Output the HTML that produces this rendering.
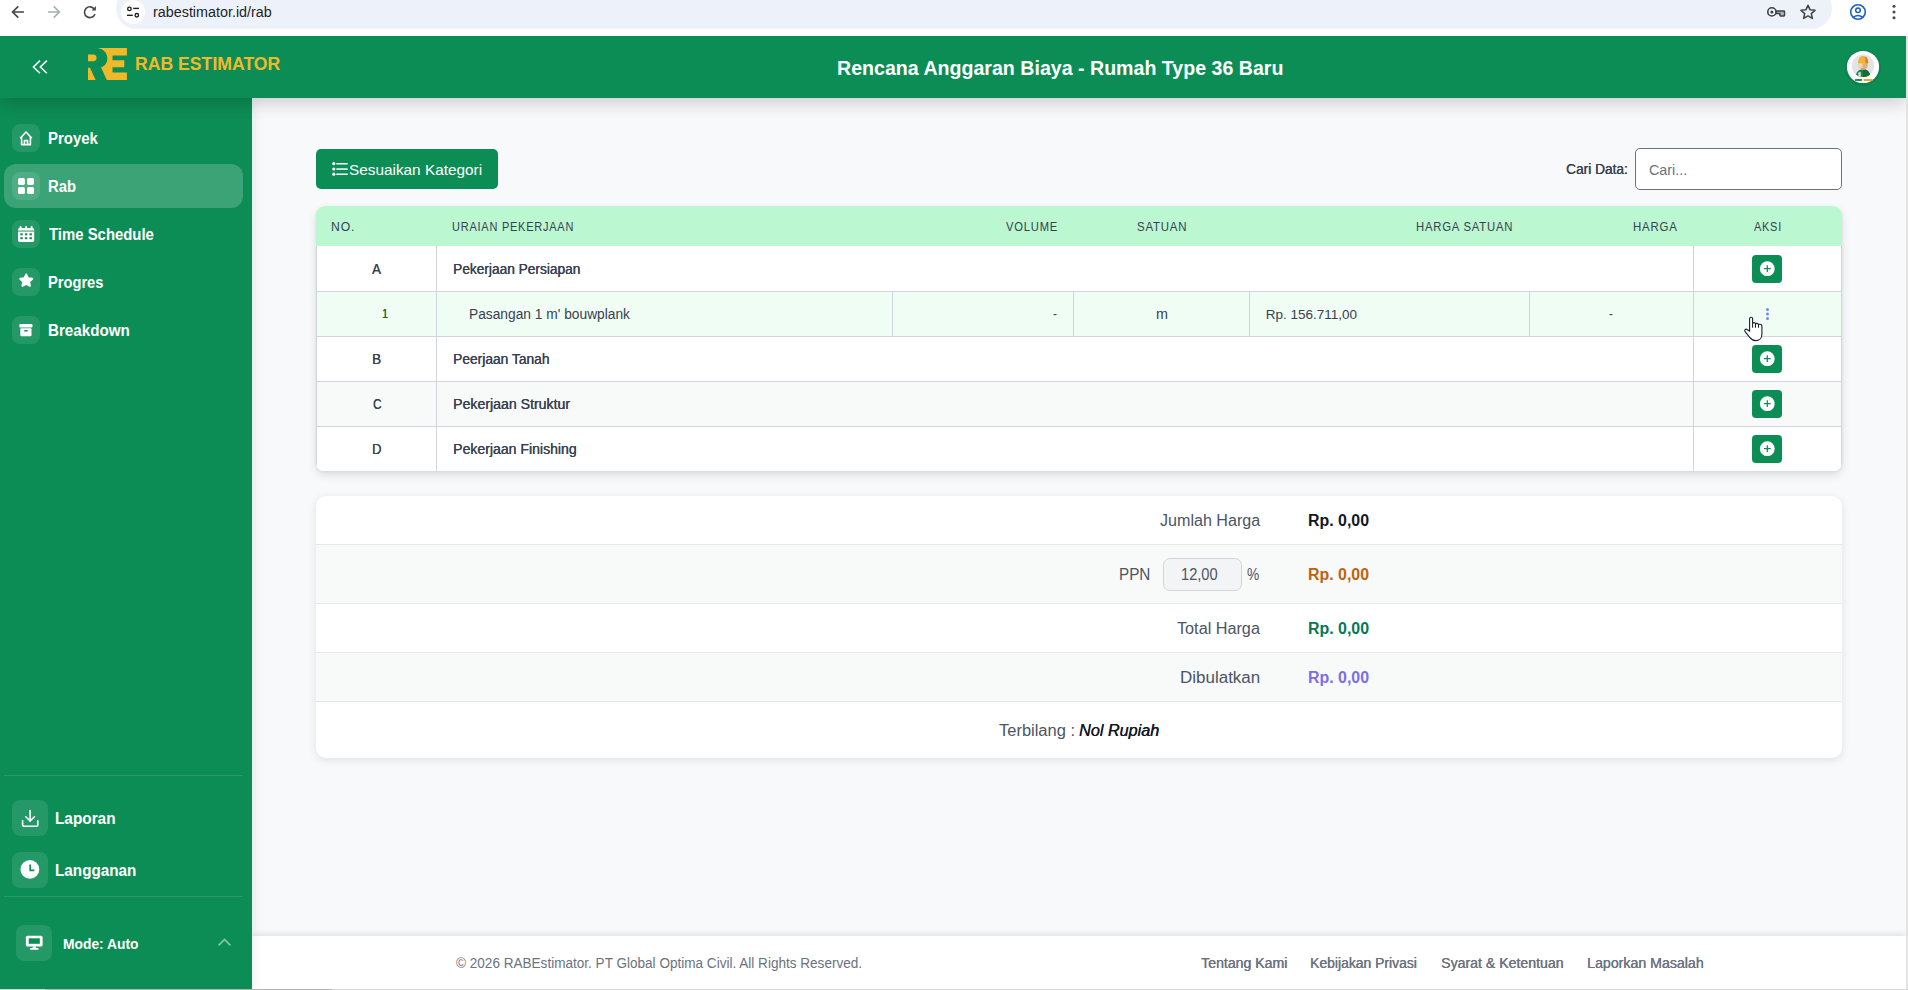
<!DOCTYPE html>
<html>
<head>
<meta charset="utf-8">
<title>RAB Estimator</title>
<style>
*{box-sizing:border-box;margin:0;padding:0}
html,body{width:1908px;height:990px;overflow:hidden}
body{position:relative;background:#f8f9fb;font-family:"Liberation Sans",sans-serif;color:#374151}
.tx{position:absolute;white-space:nowrap;line-height:1;transform-origin:0 0;z-index:20}
.abs{position:absolute}
svg{position:absolute;overflow:visible}
#chrome{position:absolute;left:0;top:0;width:1908px;height:36px;background:#fff;z-index:10}
#pill{position:absolute;left:116px;top:-12px;width:1716px;height:41px;border-radius:20.5px;background:#edf2fa}
#siteinfo{position:absolute;left:121px;top:-0.5px;width:24px;height:24px;border-radius:12px;background:#fff}
#header{position:absolute;left:0;top:36px;width:1906px;height:62px;background:#0c8d55;z-index:6;box-shadow:0 4px 18px rgba(0,0,0,.2)}
#scroll{position:absolute;left:1906px;top:36px;width:2px;height:954px;background:#e3e3e3;z-index:11}
#sidebar{position:absolute;left:0;top:98px;width:252px;height:892px;background:#0c8d55;z-index:5;box-shadow:2px 0 10px rgba(0,0,0,.07)}
.nav{position:absolute;left:4px;width:239px;height:44px;border-radius:12px}
.nav.active{background:rgba(255,255,255,.2)}
.ibox{position:absolute;left:8px;top:8px;width:28px;height:28px;border-radius:8px;background:rgba(255,255,255,.1)}
.ibox2{position:absolute;width:36px;height:36px;border-radius:8px;background:rgba(255,255,255,.1)}
.sep{position:absolute;left:4px;width:239px;height:1px;background:rgba(255,255,255,.13)}
#btn{position:absolute;left:316px;top:149px;width:182px;height:40px;border-radius:5px;background:#0c8d55}
#search{position:absolute;left:1635px;top:148px;width:207px;height:42px;border:1.3px solid #6b7280;border-radius:5px;background:#fff}
#table{position:absolute;left:316px;top:206px;width:1526px;height:265px;border-radius:9px 9px 8px 8px;background:#fff;box-shadow:0 4px 10px rgba(0,0,0,.11),0 1px 3px rgba(0,0,0,.06);overflow:hidden}
#thead{position:absolute;left:0;top:0;width:1526px;height:40px;background:#bbf7d0}
.row{position:absolute;left:0;width:1526px;height:45px;border-left:1px solid #d1d5db;border-right:1px solid #d1d5db}
.hl{position:absolute;left:0;width:1526px;height:1px;background:#d1d5db}
.vl{position:absolute;width:1px;background:#d1d5db}
.add{position:absolute;left:1752px;width:30px;height:28px;border-radius:4px;background:#0c8d55;z-index:3}
#summary{position:absolute;left:316px;top:496px;width:1526px;height:262px;border-radius:10px;background:#fff;box-shadow:0 2px 8px rgba(0,0,0,.10);overflow:hidden}
.shl{position:absolute;left:0;width:1526px;height:1px;background:#e5e7eb}
#ppn{position:absolute;left:1162.5px;top:557.5px;width:79px;height:33px;border:1px solid #d1d5db;border-radius:7px;background:#f3f4f6;z-index:3}
#footer{position:absolute;left:252px;top:936px;width:1654px;height:54px;background:#fff;box-shadow:0 -2px 6px rgba(0,0,0,.10);z-index:4}
</style>
</head>
<body>
<!-- browser chrome -->
<div id="chrome">
  <div id="pill"></div>
  <div id="siteinfo"></div>
  <svg width="1908" height="36" style="left:0;top:0">
    <g fill="none" stroke-width="1.7" stroke-linecap="butt">
      <path d="M24,12 H13 M18.3,6.3 L12.6,12 L18.3,17.7" stroke="#474747"/>
      <path d="M48,12 H59 M53.7,6.3 L59.4,12 L53.7,17.7" stroke="#a9b1ad"/>
      <path d="M94.5,9.4 A5.4,5.4 0 1 0 95,14" stroke="#474747" stroke-width="1.6"/>
      <path d="M91.6,10.4 H95.9 V6.1 Z" fill="#474747" stroke="none"/>
      <circle cx="129.4" cy="8.9" r="1.75" stroke="#1f1f1f" stroke-width="1.35"/>
      <path d="M133.2,8.4 H139" stroke="#1f1f1f" stroke-width="1.4"/>
      <path d="M127,15.3 H132.8" stroke="#1f1f1f" stroke-width="1.4"/>
      <circle cx="136.8" cy="15.2" r="1.75" stroke="#1f1f1f" stroke-width="1.35"/>
      <path d="M1775.6,10.9 H1783.8 Q1784.5,10.9 1784.5,11.6 V15.3 Q1784.5,16 1783.8,16 H1780.6 Q1779.9,16 1779.9,15.3 V13.6 H1775.6 Z" fill="#b3b7bd" stroke="#3c4043" stroke-width="1.5" stroke-linejoin="round"/>
      <circle cx="1771.9" cy="11.9" r="4.1" fill="#edf2fa" stroke="#3c4043" stroke-width="1.6"/>
      <circle cx="1771.9" cy="11.9" r="1.5" fill="#3c4043" stroke="none"/>
      <path d="M1808,5.3 L1810.1,9.8 L1815,10.3 L1811.3,13.6 L1812.4,18.4 L1808,15.9 L1803.6,18.4 L1804.7,13.6 L1801,10.3 L1805.9,9.8 Z" stroke="#474747" stroke-width="1.6" stroke-linejoin="round"/>
      <circle cx="1858" cy="12" r="7.3" stroke="#1c5fc0" stroke-width="1.6"/>
      <circle cx="1858" cy="10.3" r="2.3" stroke="#1c5fc0" stroke-width="1.5"/>
      <path d="M1853.2,17.3 Q1858,13.8 1862.8,17.3" stroke="#1c5fc0" stroke-width="1.5"/>
    </g>
    <g fill="#474747"><circle cx="1894" cy="6.2" r="1.5"/><circle cx="1894" cy="12" r="1.5"/><circle cx="1894" cy="17.8" r="1.5"/></g>
  </svg>
</div>
<!-- header -->
<div id="header">
  <svg width="60" height="62" style="left:0;top:0">
    <path d="M40,24.6 L33.4,31 L40,37.2 M46.9,24.6 L40.3,31 L46.9,37.2" fill="none" stroke="#fff" stroke-width="1.5"/>
  </svg>
  <svg width="40" height="33" style="left:88px;top:12px" viewBox="0 0 40 33">
    <g fill="#f0b92b">
      <path d="M9.4,0 L38.9,0 L38.9,7.5 L24.5,7.5 L24.5,12.3 L36.3,12.3 L36.3,19.2 L24.5,19.2 L24.5,24.4 L38.9,24.4 L38.9,32 L18.8,32 L13,19.2 C17.2,18 19.6,14.2 19.3,9.7 C19,4.6 15,0.6 9.4,0 Z"/>
      <path d="M0,6.6 L5,6.6 C7.5,6.6 8.6,8 8.6,9.9 C8.6,11.8 7.5,13.2 5,13.2 L0,13.2 Z"/>
      <path d="M0,19.7 L2,19.7 L7.6,32 L0,32 Z"/>
    </g>
  </svg>
  <svg width="40" height="40" style="left:1843px;top:11px">
    <defs><clipPath id="av"><circle cx="20" cy="18.8" r="11.2"/></clipPath></defs>
    <circle cx="20" cy="21" r="18" fill="#000" opacity=".07"/>
    <circle cx="20" cy="20" r="16.1" fill="#fff"/>
    <circle cx="20" cy="18.8" r="11.2" fill="#e1e3e5"/>
    <g clip-path="url(#av)">
      <path d="M12.6,31 C12.8,25 15.5,22.2 20,22.2 C24.5,22.2 27.2,25 27.4,31 Z" fill="#138a45"/>
      <path d="M20,22.2 C24.5,22.2 27.2,25 27.4,31 L20,31 Z" fill="#0f6e3a"/>
      <rect x="15.3" y="25" width="2.6" height="6" rx="1" fill="#d8d4dc"/>
      <rect x="18" y="20" width="4" height="3" fill="#c99468"/>
      <path d="M15.8,15.5 H24.6 V19.2 C24.6,21 22.6,21.8 20.2,21.8 C17.8,21.8 15.8,21 15.8,19.2 Z" fill="#dcb07f"/>
      <path d="M15.7,15.6 H19.5 V21.2 C17.4,21 15.7,20.3 15.7,18.8 Z" fill="#efd7ae"/>
      <path d="M15,16.2 C15,11.6 17,9 20.1,9 C23.2,9 25.2,11.6 25.2,16.2 Z" fill="#f0b534"/>
      <path d="M22,9.6 C24,10.4 25.2,12.6 25.2,16.2 L22.8,16.2 Z" fill="#e07b2a"/>
    </g>
    <rect x="11.7" y="31.9" width="7.5" height="2.2" rx="1" fill="#1b8f4c"/>
    <rect x="20.5" y="31.9" width="9.4" height="2.2" rx="1" fill="#eea628"/>
  </svg>
</div>
<div id="scroll"></div>
<!-- sidebar -->
<div id="sidebar">
  <div class="nav" style="top:18px"><div class="ibox"></div></div>
  <div class="nav active" style="top:66px"><div class="ibox"></div></div>
  <div class="nav" style="top:114px"><div class="ibox"></div></div>
  <div class="nav" style="top:162px"><div class="ibox"></div></div>
  <div class="nav" style="top:210px"><div class="ibox"></div></div>
  <div class="sep" style="top:677px"></div>
  <div class="ibox2" style="left:12px;top:702px"></div>
  <div class="ibox2" style="left:12px;top:754px"></div>
  <div class="sep" style="top:798px"></div>
  <div class="ibox2" style="left:16px;top:827px"></div>
</div>
<svg width="252" height="990" style="left:0;top:0;z-index:7">
  <g fill="none" stroke="#fff" stroke-width="1.6" stroke-linejoin="round">
    <path d="M20.2,138.2 L26,132 L31.8,138.2"/>
    <path d="M21.6,136.6 V144.6 H30.4 V136.6"/>
    <path d="M24.4,144.6 V140.6 H27.6 V144.6"/>
  </g>
  <g fill="#fff">
    <rect x="18" y="178" width="6.9" height="6.9" rx="1.6"/>
    <rect x="27.1" y="178" width="6.9" height="6.9" rx="1.6"/>
    <rect x="18" y="187.1" width="6.9" height="6.9" rx="1.6"/>
    <rect x="27.1" y="187.1" width="6.9" height="6.9" rx="1.6"/>
    <!-- calendar -->
    <rect x="18" y="228" width="16.2" height="14" rx="1.8"/>
    <rect x="19.6" y="225.9" width="2" height="3.2" rx="1"/>
    <rect x="25.1" y="225.9" width="2" height="3.2" rx="1"/>
    <rect x="30.6" y="225.9" width="2" height="3.2" rx="1"/>
    <!-- star -->
    <path d="M26.2,274.4 L28.1,278.3 L32.3,278.8 L29.2,281.7 L30,285.9 L26.2,283.8 L22.4,285.9 L23.2,281.7 L20.1,278.8 L24.3,278.3 Z" stroke="#fff" stroke-width="1.9" stroke-linejoin="round"/>
    <!-- archive -->
    <rect x="19.3" y="324" width="13.2" height="3.4" rx="1"/>
    <rect x="20.3" y="328.3" width="11.2" height="8" rx="1"/>
    <!-- clock -->
    <circle cx="29.9" cy="869.4" r="9.4"/>
  </g>
  <g fill="#0c8d55">
    <rect x="18" y="230.6" width="16.2" height="0.9"/>
    <rect x="20.3" y="233.3" width="2.4" height="2"/><rect x="24.9" y="233.3" width="2.4" height="2"/><rect x="29.5" y="233.3" width="2.4" height="2"/>
    <rect x="20.3" y="237.2" width="2.4" height="2"/><rect x="24.9" y="237.2" width="2.4" height="2"/><rect x="29.5" y="237.2" width="2.4" height="2"/>
    <rect x="24.2" y="330" width="3.6" height="1.6" rx=".6"/>
  </g>
  <path d="M30.2,864.6 V870.4 H34.4" fill="none" stroke="#0c8d55" stroke-width="1.7"/>
  <g fill="none" stroke="#fff" stroke-width="1.6" stroke-linecap="round" stroke-linejoin="round">
    <path d="M30.1,810.6 V821"/>
    <path d="M25.8,816.8 L30.1,821 L34.4,816.8"/>
    <path d="M22.6,820.8 V825 Q22.6,826.2 23.8,826.2 H36.6 Q37.8,826.2 37.8,825 V820.8"/>
  </g>
  <rect x="25.9" y="935.7" width="16.7" height="10.9" rx="1.6" fill="#fff"/>
  <rect x="28.7" y="938.3" width="11.1" height="5.5" fill="#0c8d55"/>
  <rect x="32.7" y="946.4" width="3.2" height="1.8" fill="#fff"/>
  <rect x="30" y="948" width="8.6" height="1.8" rx=".6" fill="#fff"/>
  <path d="M218.6,945.4 L224.5,939.4 L230.4,945.4" fill="none" stroke="rgba(255,255,255,.5)" stroke-width="1.6"/>
</svg>
<!-- toolbar -->
<div id="btn"></div>
<svg width="20" height="20" style="left:330px;top:160px;z-index:8">
  <g fill="#fff"><circle cx="3.8" cy="3.7" r="1.6"/><circle cx="3.8" cy="9" r="1.6"/><circle cx="3.8" cy="14.2" r="1.6"/>
  <rect x="6.3" y="3" width="11.4" height="1.5"/><rect x="6.3" y="8.3" width="11.4" height="1.5"/><rect x="6.3" y="13.5" width="11.4" height="1.5"/></g>
</svg>
<div id="search"></div>
<!-- table -->
<div id="table">
  <div id="thead"></div>
  <div class="row" style="top:40px;background:#fff"></div>
  <div class="row" style="top:85px;background:#f0fdf4"></div>
  <div class="row" style="top:130px;background:#fff"></div>
  <div class="row" style="top:175px;background:#f8faf9"></div>
  <div class="row" style="top:220px;background:#fff"></div>
  <div class="hl" style="top:85px"></div>
  <div class="hl" style="top:130px"></div>
  <div class="hl" style="top:175px"></div>
  <div class="hl" style="top:220px"></div>
  <div class="vl" style="left:120px;top:40px;height:225px"></div>
  <div class="vl" style="left:1377px;top:40px;height:225px"></div>
  <div class="vl" style="left:576px;top:85px;height:45px"></div>
  <div class="vl" style="left:757px;top:85px;height:45px"></div>
  <div class="vl" style="left:933px;top:85px;height:45px"></div>
  <div class="vl" style="left:1213px;top:85px;height:45px"></div>
</div>
<div class="add" style="top:255px"></div>
<div class="add" style="top:345px"></div>
<div class="add" style="top:390px"></div>
<div class="add" style="top:435px"></div>
<svg width="30" height="240" style="left:1752px;top:246px;z-index:9">
  <g fill="#fff"><circle cx="15.3" cy="22.7" r="7.4"/><circle cx="15.3" cy="112.7" r="7.4"/><circle cx="15.3" cy="157.7" r="7.4"/><circle cx="15.3" cy="202.7" r="7.4"/></g>
  <g stroke="#0c8d55" stroke-width="1.25"><path d="M15.3,19.3 V26.1 M11.9,22.7 H18.7"/><path d="M15.3,109.3 V116.1 M11.9,112.7 H18.7"/><path d="M15.3,154.3 V161.1 M11.9,157.7 H18.7"/><path d="M15.3,199.3 V206.1 M11.9,202.7 H18.7"/></g>
  <g fill="#7a83f2"><circle cx="15.5" cy="63.6" r="1.5"/><circle cx="15.5" cy="68" r="1.5"/><circle cx="15.5" cy="72.4" r="1.5"/></g>
</svg>
<!-- cursor -->
<svg width="30" height="32" style="left:1740px;top:314px;z-index:30" viewBox="0 0 30 32">
  <path d="M9.6,17.2 V4.6 Q9.6,3.2 11.1,3.2 Q12.6,3.2 12.6,4.6 V9.3 Q12.9,8.6 14,8.6 Q15.4,8.6 15.5,9.8 Q15.8,9.4 16.9,9.4 Q18.3,9.4 18.5,10.6 Q18.8,10.3 19.7,10.3 Q21.9,10.3 21.9,12.2 V20.5 C21.9,24 19.5,26.6 15.5,26.6 C12.5,26.6 11.3,25.6 9.5,23.2 L5.1,17.6 C4,16.2 5.6,14.4 7.1,15.5 Z" fill="#fff" stroke="#1a1f2e" stroke-width="1.1" stroke-linejoin="round"/>
  <path d="M12.6,9.3 V13.8 M15.5,9.8 V13.8 M18.5,10.6 V13.8" fill="none" stroke="#1a1f2e" stroke-width="1.05"/>
</svg>
<!-- summary -->
<div id="summary">
  <div class="abs" style="left:0;top:48px;width:1526px;height:59px;background:#f8f9f9"></div>
  <div class="abs" style="left:0;top:156px;width:1526px;height:49px;background:#f8f9f9"></div>
  <div class="shl" style="top:48px"></div>
  <div class="shl" style="top:107px"></div>
  <div class="shl" style="top:156px"></div>
  <div class="shl" style="top:205px"></div>
</div>
<div id="ppn"></div>
<!-- footer -->
<div id="footer"></div>
<div class="abs" style="left:0;top:989px;width:1908px;height:1px;background:#d6d6d6;z-index:12"></div>
<div class="abs" style="left:45px;top:989px;width:287px;height:1px;background:#b4b4b4;z-index:12"></div>
<div class="tx" style="left:153.00px;top:5.46px;font-size:14px;font-weight:400;color:#1f1f1f;transform:scaleX(1.0245);">rabestimator.id/rab</div>
<div class="tx" style="left:135.05px;top:54.65px;font-size:18.5px;font-weight:700;color:#f0b92b;transform:scaleX(0.9531);">RAB ESTIMATOR</div>
<div class="tx" style="left:837.02px;top:58.38px;font-size:20px;font-weight:700;color:#ffffff;transform:scaleX(0.9797);">Rencana Anggaran Biaya - Rumah Type 36 Baru</div>
<div class="tx" style="left:47.66px;top:130.76px;font-size:16px;font-weight:700;color:#ffffff;transform:scaleX(0.9358);">Proyek</div>
<div class="tx" style="left:47.67px;top:178.76px;font-size:16px;font-weight:700;color:#ffffff;transform:scaleX(0.9269);">Rab</div>
<div class="tx" style="left:48.60px;top:226.76px;font-size:16px;font-weight:700;color:#ffffff;transform:scaleX(0.9314);">Time Schedule</div>
<div class="tx" style="left:47.68px;top:274.76px;font-size:16px;font-weight:700;color:#ffffff;transform:scaleX(0.9166);">Progres</div>
<div class="tx" style="left:47.65px;top:322.76px;font-size:16px;font-weight:700;color:#ffffff;transform:scaleX(0.9483);">Breakdown</div>
<div class="tx" style="left:55.24px;top:810.76px;font-size:16px;font-weight:700;color:#ffffff;transform:scaleX(0.9585);">Laporan</div>
<div class="tx" style="left:55.25px;top:862.76px;font-size:16px;font-weight:700;color:#ffffff;transform:scaleX(0.9538);">Langganan</div>
<div class="tx" style="left:62.98px;top:935.61px;font-size:15px;font-weight:700;color:#ffffff;transform:scaleX(0.9223);">Mode: Auto</div>
<div class="tx" style="left:348.80px;top:162.19px;font-size:15.5px;font-weight:400;color:#ffffff;transform:scaleX(0.9897);">Sesuaikan Kategori</div>
<div class="tx" style="left:1565.70px;top:162.46px;font-size:14px;font-weight:400;color:#374151;transform:scaleX(0.9786);text-shadow:0.35px 0 0 #374151;">Cari Data:</div>
<div class="tx" style="left:1648.50px;top:162.19px;font-size:15.5px;font-weight:400;color:#6b7280;transform:scaleX(0.9243);">Cari...</div>
<div class="tx" style="left:331.46px;top:220.30px;font-size:13px;font-weight:400;color:#374151;transform:scaleX(0.9356);letter-spacing:0.90px;">NO.</div>
<div class="tx" style="left:452.35px;top:220.30px;font-size:13px;font-weight:400;color:#374151;transform:scaleX(0.8456);letter-spacing:0.90px;">URAIAN PEKERJAAN</div>
<div class="tx" style="left:1005.80px;top:220.30px;font-size:13px;font-weight:400;color:#374151;transform:scaleX(0.8622);letter-spacing:0.90px;">VOLUME</div>
<div class="tx" style="left:1136.70px;top:220.30px;font-size:13px;font-weight:400;color:#374151;transform:scaleX(0.8805);letter-spacing:0.90px;">SATUAN</div>
<div class="tx" style="left:1415.83px;top:220.30px;font-size:13px;font-weight:400;color:#374151;transform:scaleX(0.8700);letter-spacing:0.90px;">HARGA SATUAN</div>
<div class="tx" style="left:1632.52px;top:220.30px;font-size:13px;font-weight:400;color:#374151;transform:scaleX(0.8808);letter-spacing:0.90px;">HARGA</div>
<div class="tx" style="left:1753.60px;top:220.30px;font-size:13px;font-weight:400;color:#374151;transform:scaleX(0.8419);letter-spacing:0.90px;">AKSI</div>
<div class="tx" style="left:372.00px;top:262.46px;font-size:14px;font-weight:400;color:#374151;transform:scaleX(0.9400);text-shadow:0.35px 0 0 #374151;">A</div>
<div class="tx" style="left:452.92px;top:262.46px;font-size:14px;font-weight:400;color:#374151;transform:scaleX(0.9783);text-shadow:0.35px 0 0 #374151;">Pekerjaan Persiapan</div>
<div class="tx" style="left:381.80px;top:307.73px;font-size:12.5px;font-weight:400;color:#166534;transform:scaleX(0.8429);text-shadow:0.35px 0 0 #166534;">1</div>
<div class="tx" style="left:468.92px;top:307.46px;font-size:14px;font-weight:400;color:#374151;transform:scaleX(0.9830);">Pasangan 1 m&#x27; bouwplank</div>
<div class="tx" style="left:1052.50px;top:307.46px;font-size:14px;font-weight:400;color:#374151;transform:scaleX(0.8400);">-</div>
<div class="tx" style="left:1156.20px;top:307.46px;font-size:14px;font-weight:400;color:#374151;transform:scaleX(1.0273);">m</div>
<div class="tx" style="left:1265.80px;top:307.88px;font-size:13.5px;font-weight:400;color:#374151;">Rp. 156.711,00</div>
<div class="tx" style="left:1609.40px;top:307.46px;font-size:14px;font-weight:400;color:#374151;transform:scaleX(0.8200);">-</div>
<div class="tx" style="left:371.94px;top:352.46px;font-size:14px;font-weight:400;color:#374151;transform:scaleX(0.9625);text-shadow:0.35px 0 0 #374151;">B</div>
<div class="tx" style="left:452.92px;top:352.46px;font-size:14px;font-weight:400;color:#374151;transform:scaleX(0.9845);text-shadow:0.35px 0 0 #374151;">Peerjaan Tanah</div>
<div class="tx" style="left:372.70px;top:397.46px;font-size:14px;font-weight:400;color:#374151;transform:scaleX(0.8300);text-shadow:0.35px 0 0 #374151;">C</div>
<div class="tx" style="left:452.89px;top:397.46px;font-size:14px;font-weight:400;color:#374151;transform:scaleX(1.0080);text-shadow:0.35px 0 0 #374151;">Pekerjaan Struktur</div>
<div class="tx" style="left:371.78px;top:442.46px;font-size:14px;font-weight:400;color:#374151;transform:scaleX(0.9222);text-shadow:0.35px 0 0 #374151;">D</div>
<div class="tx" style="left:452.90px;top:442.46px;font-size:14px;font-weight:400;color:#374151;transform:scaleX(1.0044);text-shadow:0.35px 0 0 #374151;">Pekerjaan Finishing</div>
<div class="tx" style="left:1159.70px;top:512.76px;font-size:16px;font-weight:400;color:#4b5563;transform:scaleX(1.0060);">Jumlah Harga</div>
<div class="tx" style="left:1307.81px;top:512.76px;font-size:16px;font-weight:700;color:#111827;transform:scaleX(0.9940);">Rp. 0,00</div>
<div class="tx" style="left:1118.65px;top:566.76px;font-size:16px;font-weight:400;color:#4b5563;transform:scaleX(0.9539);">PPN</div>
<div class="tx" style="left:1180.89px;top:566.76px;font-size:16px;font-weight:400;color:#4b5563;transform:scaleX(0.9147);">12,00</div>
<div class="tx" style="left:1247.00px;top:566.76px;font-size:16px;font-weight:400;color:#4b5563;transform:scaleX(0.8571);">%</div>
<div class="tx" style="left:1307.81px;top:566.76px;font-size:16px;font-weight:700;color:#c2610c;transform:scaleX(0.9940);">Rp. 0,00</div>
<div class="tx" style="left:1177.00px;top:620.76px;font-size:16px;font-weight:400;color:#4b5563;transform:scaleX(1.0132);">Total Harga</div>
<div class="tx" style="left:1307.81px;top:620.76px;font-size:16px;font-weight:700;color:#047857;transform:scaleX(0.9940);">Rp. 0,00</div>
<div class="tx" style="left:1180.34px;top:669.76px;font-size:16px;font-weight:400;color:#4b5563;transform:scaleX(1.0610);">Dibulatkan</div>
<div class="tx" style="left:1307.81px;top:669.76px;font-size:16px;font-weight:700;color:#7c6ee6;transform:scaleX(0.9940);">Rp. 0,00</div>
<div class="tx" style="left:999.00px;top:722.76px;font-size:16px;font-weight:400;color:#4b5563;transform:scaleX(1.0294);">Terbilang :</div>
<div class="tx" style="left:1078.70px;top:722.76px;font-size:16px;font-weight:400;color:#111827;font-style:italic;transform:scaleX(1.0119);text-shadow:0.35px 0 0 #111827;">Nol Rupiah</div>
<div class="tx" style="left:455.80px;top:956.46px;font-size:14px;font-weight:400;color:#6b7280;transform:scaleX(0.9684);">© 2026 RABEstimator. PT Global Optima Civil. All Rights Reserved.</div>
<div class="tx" style="left:1200.60px;top:956.46px;font-size:14px;font-weight:400;color:#6b7280;transform:scaleX(1.0071);text-shadow:0.35px 0 0 #6b7280;">Tentang Kami</div>
<div class="tx" style="left:1310.41px;top:956.46px;font-size:14px;font-weight:400;color:#6b7280;transform:scaleX(0.9936);text-shadow:0.35px 0 0 #6b7280;">Kebijakan Privasi</div>
<div class="tx" style="left:1441.40px;top:956.46px;font-size:14px;font-weight:400;color:#6b7280;transform:scaleX(1.0081);text-shadow:0.35px 0 0 #6b7280;">Syarat &amp; Ketentuan</div>
<div class="tx" style="left:1586.79px;top:956.46px;font-size:14px;font-weight:400;color:#6b7280;transform:scaleX(1.0115);text-shadow:0.35px 0 0 #6b7280;">Laporkan Masalah</div>
</body>
</html>
